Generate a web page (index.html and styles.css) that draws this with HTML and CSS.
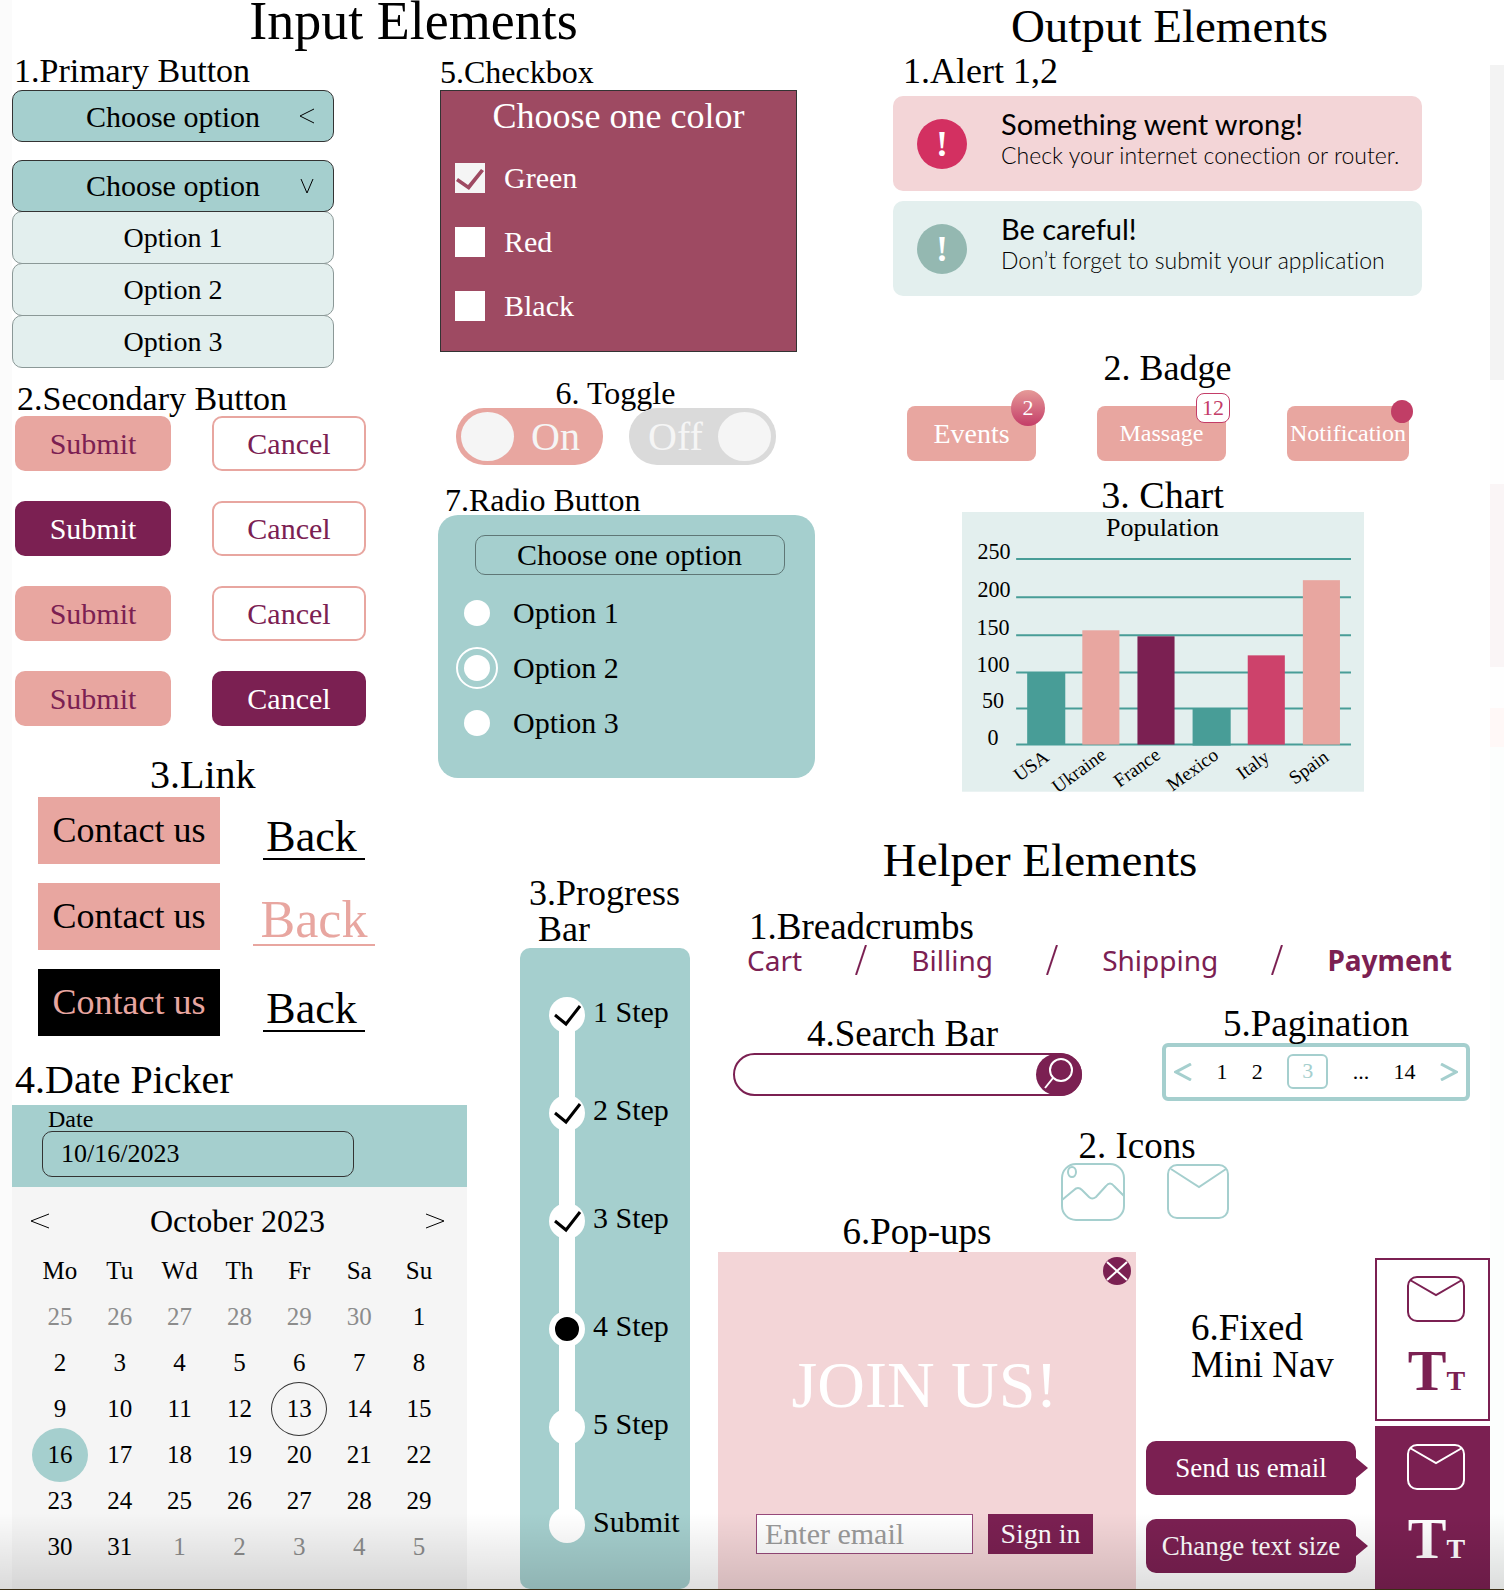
FILE: index.html
```html
<!DOCTYPE html>
<html lang="en">
<head>
<meta charset="utf-8">
<meta name="viewport" content="width=device-width, initial-scale=1">
<title>UI Elements</title>
<link rel="stylesheet" href="styles.css">
</head>
<body>
<svg class="defs" aria-hidden="true">
  <symbol id="mail" viewBox="0 0 60 48"><rect x="2" y="2" width="56" height="44" rx="9"/><path d="M4 5 L30 20 L56 5"/></symbol>
  <symbol id="tick" viewBox="0 0 36 36"><path d="M6 18 L17 27 L31 9"/></symbol>
</svg>
<main class="page">
  <h1 class="title title-input">Input Elements</h1>

  <div class="col-forms">
    <section>
      <h2 class="h-md"><label for="opt">1.Primary Button</label></h2>
      <div class="dropdown">
        <select id="opt" class="drop"><option>Choose option</option></select>
        <svg class="drop-arrow" viewBox="0 0 16 16"><path d="M15 1 L1 8 L15 15"/></svg>
      </div>
      <div class="dropdown open">
        <button class="drop" type="button" aria-expanded="true">Choose option</button>
        <svg class="drop-arrow" viewBox="0 0 16 16"><path d="M2 1 L8 15 L14 1"/></svg>
      </div>
      <ul class="options">
        <li><button type="button">Option 1</button></li>
        <li><button type="button">Option 2</button></li>
        <li><button type="button">Option 3</button></li>
      </ul>
    </section>

    <section class="secondary">
      <h2 class="h-md">2.Secondary Button</h2>
      <div class="pairs">
        <button type="button" class="btn">Submit</button><button type="button" class="btn outline">Cancel</button>
        <button type="button" class="btn dark">Submit</button><button type="button" class="btn outline">Cancel</button>
        <button type="button" class="btn">Submit</button><button type="button" class="btn outline">Cancel</button>
        <button type="button" class="btn">Submit</button><button type="button" class="btn dark">Cancel</button>
      </div>
    </section>

    <section class="links">
      <h2 class="h-xl">3.Link</h2>
      <div class="link-grid">
        <a class="contact" href="#contact">Contact us</a><a class="back" href="#back">Back</a>
        <a class="contact" href="#contact">Contact us</a><a class="back back-hover" href="#back">Back</a>
        <a class="contact contact-dark" href="#contact">Contact us</a><a class="back" href="#back">Back</a>
      </div>
    </section>

    <section class="picker">
      <h2 class="h-xl">4.Date Picker</h2>
      <div class="date-field">
        <label for="date">Date</label>
        <input id="date" type="text" value="10/16/2023">
      </div>
      <div class="calendar">
        <div class="cal-head">
          <button type="button" aria-label="Previous month"><svg viewBox="0 0 20 16"><path d="M19 1 L1 8 L19 15"/></svg></button>
          <span>October 2023</span>
          <button type="button" aria-label="Next month"><svg viewBox="0 0 20 16"><path d="M1 1 L19 8 L1 15"/></svg></button>
        </div>
        <table>
          <thead><tr><th>Mo</th><th>Tu</th><th>Wd</th><th>Th</th><th>Fr</th><th>Sa</th><th>Su</th></tr></thead>
          <tbody>
            <tr><td class="off">25</td><td class="off">26</td><td class="off">27</td><td class="off">28</td><td class="off">29</td><td class="off">30</td><td>1</td></tr>
            <tr><td>2</td><td>3</td><td>4</td><td>5</td><td>6</td><td>7</td><td>8</td></tr>
            <tr><td>9</td><td>10</td><td>11</td><td>12</td><td><span class="today">13</span></td><td>14</td><td>15</td></tr>
            <tr><td><span class="picked">16</span></td><td>17</td><td>18</td><td>19</td><td>20</td><td>21</td><td>22</td></tr>
            <tr><td>23</td><td>24</td><td>25</td><td>26</td><td>27</td><td>28</td><td>29</td></tr>
            <tr><td>30</td><td>31</td><td class="off">1</td><td class="off">2</td><td class="off">3</td><td class="off">4</td><td class="off">5</td></tr>
          </tbody>
        </table>
      </div>
    </section>
  </div>

  <div class="col-choices">
    <section>
      <h2 class="h-sm">5.Checkbox</h2>
      <fieldset class="checks">
        <legend>Choose one color</legend>
        <label><input type="checkbox" checked>Green</label>
        <label><input type="checkbox">Red</label>
        <label><input type="checkbox">Black</label>
      </fieldset>
    </section>
    <section class="toggles">
      <h2 class="h-sm">6. Toggle</h2>
      <div class="toggle-row">
        <label class="toggle"><input type="checkbox" role="switch" checked><span>On</span></label>
        <label class="toggle toggle-off"><span>Off</span><input type="checkbox" role="switch"></label>
      </div>
    </section>
    <section class="radio-section">
      <h2 class="h-sm">7.Radio Button</h2>
      <fieldset class="radios">
        <legend>Choose one option</legend>
        <label><input type="radio" name="choice">Option 1</label>
        <label><input type="radio" name="choice" checked>Option 2</label>
        <label><input type="radio" name="choice">Option 3</label>
      </fieldset>
    </section>
  </div>

  <div class="output">
    <h1 class="title title-output">Output Elements</h1>
    <h2 class="h-lg alert-title">1.Alert 1,2</h2>
    <div class="alert alert-error" role="alert">
      <span class="mark">!</span>
      <div><strong>Something went wrong!</strong><p>Check your internet conection or router.</p></div>
    </div>
    <div class="alert alert-info" role="alert">
      <span class="mark">!</span>
      <div><strong>Be careful!</strong><p>Don’t forget to submit your application</p></div>
    </div>
    <h2 class="h-lg badge-title">2. Badge</h2>
    <div class="badges">
      <button type="button" class="tag tag-events">Events<span class="badge badge-round">2</span></button>
      <button type="button" class="tag">Massage<span class="badge badge-box">12</span></button>
      <button type="button" class="tag tag-note">Notification<span class="badge badge-dot"></span></button>
    </div>
    <h2 class="h-lg chart-title">3. Chart</h2>
    <svg class="chart" viewBox="0 0 401 279" role="img" aria-label="Population chart">
      <rect width="401" height="279" fill="#e3efee"/>
      <text class="chart-name" x="200" y="24">Population</text>
      <g class="axis"><text x="32" y="47">250</text><text x="32" y="85">200</text><text x="31" y="123">150</text><text x="31" y="160">100</text><text x="31" y="196">50</text><text x="31" y="232">0</text></g>
      <path class="grid-lines" d="M54 47H388M54 85H388M54 123H388M54 160H388M54 196H388M54 232H388"/>
      <rect x="65" y="160" width="38" height="72" fill="#489d97"/>
      <rect x="120" y="118" width="37" height="114" fill="#e8a6a0"/>
      <rect x="175" y="124" width="37" height="108" fill="#7b2052"/>
      <rect x="230" y="196" width="38" height="37" fill="#489d97"/>
      <rect x="285" y="143" width="37" height="89" fill="#cd426b"/>
      <rect x="340" y="68" width="37" height="164" fill="#e8a6a0"/>
      <g class="countries">
        <text transform="translate(88 247) rotate(-36)">USA</text>
        <text transform="translate(145 245) rotate(-36)">Ukraine</text>
        <text transform="translate(199 245) rotate(-36)">France</text>
        <text transform="translate(257 245) rotate(-36)">Mexico</text>
        <text transform="translate(308 247) rotate(-36)">Italy</text>
        <text transform="translate(367 247) rotate(-36)">Spain</text>
      </g>
    </svg>
  </div>

  <section class="progress">
    <h2 class="h-lg">3.Progress<br>&nbsp;Bar</h2>
    <ol class="steps">
      <li><span class="dot"><svg><use href="#tick"/></svg></span>1 Step</li>
      <li class="long"><span class="dot"><svg><use href="#tick"/></svg></span>2 Step</li>
      <li class="long"><span class="dot"><svg><use href="#tick"/></svg></span>3 Step</li>
      <li><span class="dot current"></span>4 Step</li>
      <li><span class="dot"></span>5 Step</li>
      <li><span class="dot"></span>Submit</li>
    </ol>
  </section>

  <div class="helper">
    <h1 class="title title-helper">Helper Elements</h1>
    <h2 class="h-lg crumb-title">1.Breadcrumbs</h2>
    <nav class="crumbs" aria-label="Breadcrumbs">
      <a href="#cart">Cart</a>
      <svg viewBox="0 0 12 30"><path d="M1 30 L11 0"/></svg>
      <a href="#billing">Billing</a>
      <svg viewBox="0 0 12 30"><path d="M1 30 L11 0"/></svg>
      <a href="#shipping">Shipping</a>
      <svg viewBox="0 0 12 30"><path d="M1 30 L11 0"/></svg>
      <a href="#payment" aria-current="page">Payment</a>
    </nav>
    <div class="tools">
      <section class="search">
        <h2 class="h-lg"><label for="q">4.Search Bar</label></h2>
        <form class="search-box">
          <input id="q" type="search">
          <button type="button" aria-label="Search"><svg viewBox="0 0 46 43"><circle cx="25" cy="17" r="11"/><path d="M17 25 L9 35"/></svg></button>
        </form>
      </section>
      <section class="paging">
        <h2 class="h-lg">5.Pagination</h2>
        <nav class="pages" aria-label="Pages">
          <a href="#prev" aria-label="Previous"><svg viewBox="0 0 18 18"><path d="M17 1 L2 9 L17 17"/></svg></a>
          <a href="#p1">1</a><a href="#p2">2</a><a href="#p3" class="active" aria-current="page">3</a><span>...</span><a href="#p14">14</a>
          <a href="#next" aria-label="Next"><svg viewBox="0 0 18 18"><path d="M1 1 L16 9 L1 17"/></svg></a>
        </nav>
      </section>
    </div>
    <section class="icons">
      <h2 class="h-lg">2. Icons</h2>
      <div class="icon-row">
        <svg class="icon-image" viewBox="0 0 64 58"><rect x="1" y="1" width="62" height="56" rx="14"/><ellipse cx="11" cy="9" rx="4" ry="5"/><path d="M1 37 L13 27 Q17 23 21 27 L28 34 Q31 37 35 34 L45 23 Q49 18 53 23 L63 33"/></svg>
        <svg class="icon-mail" viewBox="0 0 62 55"><rect x="1" y="1" width="60" height="53" rx="9"/><path d="M4 5 L32 23 L59 5"/></svg>
      </div>
    </section>
    <div class="bottom">
      <section class="popup-section">
        <h2 class="h-lg">6.Pop-ups</h2>
        <div class="popup" role="dialog" aria-label="Join us">
          <button class="close" type="button" aria-label="Close"><svg viewBox="0 0 28 28"><circle cx="14" cy="14" r="14"/><path d="M4 5 L24 23 M24 5 L4 23"/></svg></button>
          <p>JOIN US!</p>
          <form class="signup">
            <input type="email" placeholder="Enter email" aria-label="Enter email">
            <button type="button">Sign in</button>
          </form>
        </div>
      </section>
      <section class="mini">
        <h2 class="h-lg">6.Fixed<br>Mini Nav</h2>
        <nav class="mini-nav" aria-label="Mini navigation">
          <a href="#mail" aria-label="Email"><svg><use href="#mail"/></svg></a>
          <a class="tt" href="#size">T<small>T</small></a>
        </nav>
        <div class="tips"><span>Send us email</span><span>Change text size</span></div>
        <nav class="mini-nav filled" aria-label="Mini navigation, expanded">
          <a href="#mail" aria-label="Email"><svg><use href="#mail"/></svg></a>
          <a class="tt" href="#size">T<small>T</small></a>
        </nav>
      </section>
    </div>
  </div>
</main>
</body>
</html>
```
FILE: styles.css
```css
:root {
  --teal: #a5cfce;
  --mist: #e3efee;
  --rose: #e8a6a0;
  --plum: #7b2052;
  --blush: #f3d5d7;
}

* { box-sizing: border-box; }

body {
  margin: 0;
  border-bottom: 2px solid #3a2e14;
  font-family: "Liberation Serif", serif;
  color: #000;
  background: #fff;
}

button, input, select { font: inherit; color: inherit; margin: 0; }
button { padding: 0; border: 0; background: none; cursor: pointer; }
a { color: inherit; text-decoration: none; }
h1, h2, p, ul, ol, fieldset { margin: 0; padding: 0; border: 0; font-weight: 400; }
ul, ol { list-style: none; }
svg { display: block; fill: none; stroke: currentColor; }
.defs { position: absolute; width: 0; height: 0; }

/* Page grid; the side gutters carry a faint tint */
.page {
  position: relative;
  min-height: calc(100vh - 2px);
  padding: 0 14px 0 12px;
  display: grid;
  grid-template-columns:
    [forms] minmax(0, 426fr) [choices] minmax(0, 29fr) [forms-end] minmax(0, 53fr)
    [progress] minmax(0, 170fr) [progress-end] minmax(0, 28fr) [helper] minmax(0, 97fr)
    [choices-end] minmax(0, 78fr) [output] minmax(0, 597fr) [end];
  grid-template-rows: 54px auto 1fr;
  background:
    linear-gradient(#fbfbfb, #fbfbfb) 0 0 / 12px 100% no-repeat,
    linear-gradient(#fff 65px, #f3f3f3 65px 380px, #fefefe 380px 484px, #faf5f6 484px 667px, #fefefe 667px 708px, #fff8f7 708px 747px, #fcfefd 747px) 100% 0 / 14px 100% no-repeat;
}
.page::after {
  content: "";
  position: absolute;
  inset: auto 0 0;
  height: 76px;
  background: linear-gradient(transparent, rgba(0, 0, 0, .13));
  pointer-events: none;
}

.title { text-align: center; font-size: 47px; line-height: 52px; }
.h-sm { font-size: 32px; line-height: 30px; }
.h-md { font-size: 34px; line-height: 34px; }
.h-lg { font-size: 36px; line-height: 34px; }
.h-xl { font-size: 40px; line-height: 40px; }

.title-input {
  grid-column: forms / choices-end;
  grid-row: 1;
  font-size: 54px;
  line-height: 42px;
}

/* Forms column */
.col-forms {
  grid-column: forms / forms-end;
  grid-row: 2 / 4;
  display: flex;
  flex-direction: column;
}
.col-forms .h-md { padding-left: 2px; }
.dropdown { position: relative; width: 322px; margin-top: 2px; }
.dropdown.open { margin-top: 18px; }
.drop {
  display: block;
  width: 100%;
  height: 52px;
  appearance: none;
  border: 1px solid #333;
  border-radius: 10px;
  background: var(--teal);
  font-size: 30px;
  text-align: center;
  text-align-last: center;
}
.drop-arrow { position: absolute; right: 19px; top: 18px; width: 16px; height: 16px; pointer-events: none; }
.options { width: 322px; }
.options button {
  width: 100%;
  height: 53px;
  margin-top: -1px;
  display: block;
  border: 1px solid #8b9897;
  border-radius: 10px;
  background: var(--mist);
  font-size: 28px;
}

.secondary { margin-top: 14px; }
.col-forms .secondary .h-md { padding-left: 5px; }
.pairs {
  display: grid;
  grid-template-columns: 156px 154px;
  gap: 30px 41px;
  padding-left: 3px;
}
.btn {
  height: 55px;
  border-radius: 10px;
  background: var(--rose);
  color: var(--plum);
  font-size: 30px;
}
.btn.outline { background: #fff; border: 2px solid var(--rose); }
.btn.dark { background: var(--plum); color: #fff; }

.links { margin-top: 29px; padding-left: 26px; }
.links .h-xl { padding-left: 112px; margin-bottom: 2px; }
.link-grid {
  display: grid;
  grid-template-columns: 182px 122px;
  gap: 19px 33px;
}
.contact {
  height: 67px;
  line-height: 66px;
  background: var(--rose);
  font-size: 36px;
  text-align: center;
}
.contact-dark { background: #000; color: var(--rose); }
.back {
  place-self: end center;
  margin-bottom: 4px;
  padding: 0 8px 0 3px;
  border-bottom: 2px solid;
  font-size: 44px;
  line-height: 42px;
}
.back-hover { padding: 0 8px; color: var(--rose); font-size: 52px; line-height: 48px; }

.picker { margin-top: 24px; flex: 1; display: flex; flex-direction: column; }
.picker .h-xl { padding-left: 3px; margin-bottom: 5px; }
.date-field { padding: 2px 30px 10px; background: var(--teal); }
.date-field label { display: block; padding-left: 6px; font-size: 24px; line-height: 24px; }
.date-field input {
  display: block;
  width: 312px;
  height: 46px;
  padding: 0 18px;
  border: 1px solid #333;
  border-radius: 10px;
  background: none;
  font-size: 26px;
}
.calendar { flex: 1; padding: 16px 18px; background: #f5f5f5; }
.cal-head {
  display: flex;
  justify-content: space-between;
  align-items: center;
  padding: 0 4px 0 0;
  margin-bottom: 9px;
  font-size: 32px;
  line-height: 36px;
}
.cal-head svg { width: 20px; height: 16px; }
.calendar table { width: 100%; border-collapse: collapse; table-layout: fixed; font-size: 25px; line-height: 46px; }
.calendar th, .calendar td { height: 46px; padding: 0; text-align: center; font-weight: 400; }
.calendar .off { color: #8c8c8c; }
.today, .picked {
  display: block;
  width: 56px;
  height: 54px;
  margin: -4px auto;
  border-radius: 50%;
  line-height: 54px;
}
.today { border: 1px solid #333; line-height: 52px; }
.picked { background: var(--teal); }

/* Choices column */
.col-choices { grid-column: choices / choices-end; grid-row: 2; padding-top: 3px; }
.col-choices .h-sm { padding-left: 2px; }
.checks {
  display: grid;
  gap: 34px;
  margin: 3px 18px 0 2px;
  padding: 5px 14px 30px;
  border: 1px solid #333;
  background: #9e4a62;
  color: #fff;
}
.checks legend {
  float: left;
  width: 100%;
  margin-bottom: -7px;
  padding: 0;
  font-size: 36px;
  line-height: 40px;
  text-align: center;
}
.checks label { display: flex; align-items: center; gap: 19px; height: 30px; font-size: 30px; }
.checks input { appearance: none; width: 30px; height: 30px; background: #fff; }
.checks input:checked { background: #f5f5f5; }
.checks input:checked::before {
  content: "";
  display: block;
  width: 30px;
  height: 30px;
  background: #9e4a62;
  clip-path: polygon(3px 15px, 13px 22px, 26px 6px, 29px 8px, 14px 27px, 1px 18px);
}

.toggles { margin-top: 26px; }
.toggles .h-sm { text-align: center; padding-right: 24px; }
.toggle-row { display: flex; justify-content: center; gap: 26px; padding-right: 22px; }
.toggle {
  display: flex;
  align-items: center;
  width: 147px;
  height: 57px;
  padding: 4px 5px;
  border-radius: 28px;
  background: var(--rose);
  color: #f5f5f5;
  font-size: 40px;
}
.toggle span { flex: 1; text-align: center; line-height: 48px; }
.toggle input { appearance: none; width: 53px; height: 49px; border-radius: 50%; background: #f5f5f5; }
.toggle-off { background: #dadada; }

.radio-section { margin-top: 20px; }
.radio-section .h-sm { padding-left: 7px; }
.radios {
  display: grid;
  gap: 13px;
  padding: 20px 12px 34px 18px;
  border-radius: 20px;
  background: var(--teal);
  font-size: 30px;
}
.radios legend {
  float: left;
  justify-self: center;
  width: 310px;
  margin-bottom: 4px;
  padding: 0;
  border: 1px solid #5f7776;
  border-radius: 10px;
  line-height: 38px;
  text-align: center;
}
.radios label { display: flex; align-items: center; gap: 15px; height: 42px; }
.radios input {
  appearance: none;
  display: grid;
  place-items: center;
  width: 42px;
  height: 42px;
  border: 2px solid transparent;
  border-radius: 50%;
}
.radios input::before { content: ""; width: 26px; height: 26px; border-radius: 50%; background: #fff; }
.radios input:checked { border-color: #fff; }

/* Output column */
.output { grid-column: output / end; grid-row: 1 / 3; padding-right: 68px; }
.title-output { padding-left: 24px; }
.alert-title { margin: 2px 0 8px; padding-left: 10px; }
.alert {
  display: flex;
  align-items: center;
  gap: 34px;
  min-height: 95px;
  padding: 0 24px;
  border-radius: 10px;
  font-family: Lato, "Open Sans", sans-serif;
  font-variant-ligatures: none;
}
.alert + .alert { margin-top: 10px; }
.alert-error { background: var(--blush); --mark: #d33061; }
.alert-info { background: var(--mist); --mark: #94b8b1; }
.alert > div { padding-bottom: 10px; white-space: nowrap; }
.alert strong { display: block; font-size: 29px; font-weight: 400; line-height: 32px; }
.alert p { font-size: 23px; font-weight: 300; line-height: 30px; }
.mark {
  flex: none;
  width: 50px;
  height: 50px;
  border-radius: 50%;
  background: var(--mark);
  color: #fff;
  font: 700 36px/50px "Liberation Serif", serif;
  text-align: center;
}

.badge-title { margin-top: 55px; padding-left: 20px; text-align: center; }
.badges { display: flex; justify-content: space-between; margin-top: 21px; padding: 0 13px 0 14px; }
.tag {
  position: relative;
  width: 129px;
  height: 55px;
  border-radius: 8px;
  background: var(--rose);
  color: #fff;
  font-size: 24px;
}
.tag-events { font-size: 28px; }
.tag-note { width: 122px; }
.badge { position: absolute; }
.badge-round {
  top: -16px;
  right: -9px;
  width: 34px;
  height: 36px;
  border-radius: 50%;
  background: linear-gradient(#e59a98, #c43d68);
  font-size: 22px;
  line-height: 36px;
}
.badge-box {
  top: -13px;
  right: -4px;
  width: 34px;
  height: 30px;
  border: 1px solid #c43d68;
  border-radius: 8px;
  background: #fff;
  color: #c43d68;
  font-size: 22px;
  line-height: 28px;
}
.badge-dot { top: -6px; right: -4px; width: 22px; height: 23px; border-radius: 50%; background: #c13e66; }

.chart-title { margin-top: 17px; padding-left: 10px; font-size: 38px; text-align: center; }
.chart { width: 76%; margin-left: 13%; }
.chart rect { stroke: none; }
.chart text { fill: #000; stroke: none; text-anchor: middle; font-size: 22px; }
.chart .chart-name { font-size: 26px; }
.chart .countries text { text-anchor: end; font-size: 19px; }
.chart .grid-lines { stroke: #489d97; stroke-width: 2; }

/* Progress */
.progress {
  grid-column: progress / progress-end;
  grid-row: 3;
  display: flex;
  flex-direction: column;
  padding-top: 83px;
}
.progress .h-lg { padding-left: 9px; line-height: 36px; white-space: nowrap; }
.steps {
  flex: 1;
  margin-top: 1px;
  padding: 49px 0 44px 29px;
  border-radius: 10px;
  background: var(--teal);
  font-size: 30px;
  line-height: 30px;
}
.steps li {
  position: relative;
  display: flex;
  align-items: flex-start;
  gap: 8px;
  height: 98px;
}
.steps li.long { height: 108px; }
.steps li:last-child { height: 36px; }
.steps li:not(:last-child)::before {
  content: "";
  position: absolute;
  left: 10px;
  top: 18px;
  width: 16px;
  height: 100%;
  background: #fff;
}
.dot { position: relative; flex: none; width: 36px; height: 36px; border-radius: 50%; background: #fff; }
.dot svg { width: 36px; height: 36px; stroke-width: 3; }
.dot.current { border: 6px solid #fff; background: #000; }

/* Helper */
.helper {
  grid-column: helper / end;
  grid-row: 3;
  display: flex;
  flex-direction: column;
  padding-top: 42px;
}
.helper .h-lg { font-size: 37px; }
.title-helper { padding-right: 128px; }
.crumb-title { margin-top: 24px; padding-left: 31px; }
.crumbs {
  display: flex;
  justify-content: space-between;
  align-items: center;
  padding: 0 38px 0 29px;
  color: var(--plum);
  font: 28px/32px "Noto Sans", sans-serif;
}
.crumbs svg { width: 12px; height: 30px; margin-left: 8px; stroke-width: 2; }
.crumbs [aria-current] { font-weight: 700; }

.tools { display: flex; justify-content: space-between; align-items: flex-start; margin-top: 31px; padding: 0 20px 0 15px; }
.search { width: 349px; padding-top: 10px; }
.search .h-lg { padding-right: 10px; text-align: center; }
.search-box {
  display: flex;
  height: 43px;
  margin-top: 2px;
  border: 2px solid var(--plum);
  border-radius: 22px;
}
.search-box input { flex: 1; min-width: 0; padding: 0 18px; border: 0; outline: 0; font-size: 24px; background: none; appearance: none; }
.search-box button { width: 46px; height: 43px; margin: -2px; border-radius: 50%; background: var(--plum); color: #fff; }
.search-box svg { width: 46px; height: 43px; stroke-width: 2; }

.paging { width: 308px; }
.paging .h-lg { text-align: center; }
.pages {
  display: flex;
  align-items: center;
  justify-content: space-between;
  height: 58px;
  margin-top: 2px;
  padding: 0 8px;
  border: 4px solid var(--teal);
  border-radius: 6px;
  font-size: 22px;
}
.pages svg { width: 18px; height: 18px; color: var(--teal); stroke-width: 3; }
.pages .active { width: 41px; height: 35px; border: 2px solid var(--teal); border-radius: 6px; color: var(--teal); line-height: 30px; text-align: center; }

.icons { width: 172px; margin: 28px 0 0 343px; color: var(--teal); }
.icons .h-lg { padding-right: 20px; color: #000; text-align: center; }
.icon-row { display: flex; justify-content: space-between; align-items: center; padding-right: 4px; }
.icon-image { width: 64px; height: 58px; stroke-width: 2; }
.icon-mail { width: 62px; height: 55px; stroke-width: 2; }

.bottom { flex: 1; display: flex; gap: 10px; margin-top: -6px; }
.popup-section { flex: 1; min-width: 0; display: flex; flex-direction: column; }
.popup-section .h-lg { padding-right: 20px; text-align: center; }
.popup {
  position: relative;
  flex: 1;
  margin-top: 3px;
  padding: 98px 43px 34px 38px;
  background: var(--blush);
}
.popup p { color: #fff; font-size: 66px; line-height: 70px; text-align: center; }
.close { position: absolute; top: 5px; right: 5px; width: 28px; height: 28px; }
.close circle { fill: var(--plum); stroke: none; }
.close path { stroke: #fff; stroke-width: 2; }
.signup { display: flex; gap: 15px; margin-top: 94px; }
.signup input {
  flex: 1;
  width: 0;
  min-width: 0;
  height: 40px;
  padding: 0 8px;
  border: 1px solid #96497a;
  background: #fff;
  font-size: 30px;
}
.signup input::placeholder { color: #9a9a9a; opacity: 1; }
.signup button { width: 105px; height: 40px; background: var(--plum); color: #fff; font-size: 28px; }

.mini {
  flex: none;
  display: grid;
  grid-template-columns: 229px 115px;
  grid-template-rows: 163px auto;
  row-gap: 5px;
  margin-top: 43px;
}
.mini .h-lg { align-self: center; padding: 14px 0 0 45px; line-height: 37px; }
.mini-nav {
  display: flex;
  flex-direction: column;
  align-items: center;
  gap: 16px;
  height: 163px;
  padding-top: 15px;
  border: 2px solid var(--plum);
  color: var(--plum);
}
.mini-nav.filled { background: var(--plum); color: #fff; }
.mini-nav svg { width: 60px; height: 48px; stroke-width: 2; margin-left: 6px; }
.tt { padding-left: 8px; font-size: 58px; line-height: 64px; font-weight: 700; }
.tt small { font-size: 28px; }
.tips { padding-top: 15px; display: grid; gap: 24px; align-content: start; }
.tips span {
  position: relative;
  width: 210px;
  height: 54px;
  border-radius: 10px;
  background: var(--plum);
  color: #fff;
  font-size: 27px;
  line-height: 54px;
  text-align: center;
}
.tips span::after {
  content: "";
  position: absolute;
  left: 100%;
  top: 17px;
  border: solid transparent;
  border-width: 10px 0 10px 12px;
  border-left-color: var(--plum);
}
```
